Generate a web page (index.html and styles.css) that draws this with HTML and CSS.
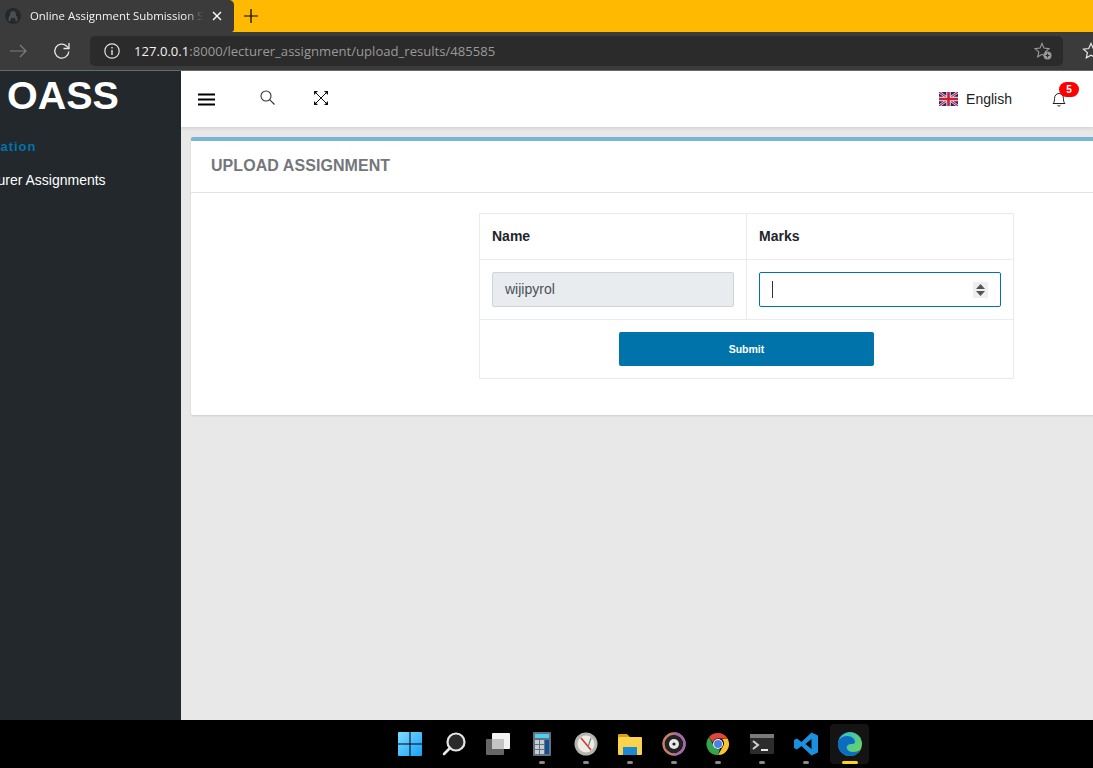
FILE: index.html
```html
<!DOCTYPE html>
<html>

<head>
    <title>Online Assignment Submission System</title>
    <link rel="stylesheet" href="styles.css">
</head>

<body>
    <!-- Browser tabs -->
    <div class="tab-strip">
        <div class="tab">
            <svg class="tab-favicon" width="16" height="16" viewBox="0 0 16 16">
                <circle cx="8" cy="8" r="8" fill="#25292c" />
                <path d="M3.500 13c0-3 .5-4.500 1.500-5.500C5 4.500 6 3 8 3s3 1.500 3 4.500c1 1 1.500 2.500 1.500 5.500h-2c0-2-.5-3-1.500-3.500L8 11 7 9.500C6 10 5.500 11 5.500 13z" fill="#4a4f53" />
            </svg>
            <span class="tab-title">Online Assignment Submission S</span>
            <svg class="tab-close" width="10" height="10" viewBox="0 0 10 10">
                <path d="M1 1l8 8M9 1l-8 8" stroke="#fff" stroke-width="1.400" />
            </svg>
        </div>
        <svg class="tab-new" width="14" height="14" viewBox="0 0 14 14">
            <path d="M7 0v14M0 7h14" stroke="#000" stroke-width="1.200" />
        </svg>
    </div>

    <!-- Browser toolbar -->
    <div class="toolbar">
        <svg class="nav-forward" width="18" height="14" viewBox="0 0 18 14">
            <path d="M1 7h16M11 1l6 6-6 6" fill="none" stroke="#7d7d7d" stroke-width="1.200" />
        </svg>
        <svg class="nav-reload" width="18" height="18" viewBox="0 0 18 18">
            <path d="M15.800 9.500a7 7 0 1 1-2.300-5.600L15.500 6" fill="none" stroke="#e8e8e8" stroke-width="1.300" />
            <path d="M16 1V6.500H10.500" fill="none" stroke="#e8e8e8" stroke-width="1.300" />
        </svg>
        <div class="address-bar">
            <svg class="info-icon" width="16" height="16" viewBox="0 0 16 16">
                <circle cx="8" cy="8" r="7.200" fill="none" stroke="#e4e4e4" stroke-width="1.200" />
                <path d="M8 7v5M8 4v1.600" stroke="#e4e4e4" stroke-width="1.400" />
            </svg>
            <span class="url"><span class="url-host">127.0.0.1</span>:8000/lecturer_assignment/upload_results/485585</span>
            <svg class="fav-add" width="18" height="18" viewBox="0 0 18 18">
                <path d="M8 1.500l2 4.600 5 .5-3.800 3.300 1.100 4.900L8 12.300 3.700 14.800l1.100-4.900L1 6.600l5-.5z" fill="none" stroke="#9a9a9a" stroke-width="1.100" />
                <circle cx="13.500" cy="13.500" r="4" fill="#9a9a9a" />
                <path d="M13.500 11.500v4M11.500 13.500h4" stroke="#2b2b2b" stroke-width="1" />
            </svg>
        </div>
        <svg class="fav-star" width="18" height="18" viewBox="0 0 18 18">
            <path d="M9 1.500l2.300 5 5.200.6-3.900 3.500 1.100 5.200L9 13.200 4.300 15.800l1.100-5.200L1.500 7.100l5.200-.6z" fill="none" stroke="#e8e8e8" stroke-width="1.200" />
        </svg>
    </div>

    <div class="app">
        <aside class="sidebar">
            <div class="sidebar-inner">
                <div class="brand">OASS</div>
                <div class="nav-heading">Navigation</div>
                <a class="nav-link">Lecturer Assignments</a>
            </div>
        </aside>

        <div class="content">
            <header class="topbar">
                <svg class="menu-icon" width="17" height="13" viewBox="0 0 17 13">
                    <path d="M0 1.500h17M0 6.500h17M0 11.500h17" stroke="#000" stroke-width="2" />
                </svg>
                <svg class="search-icon" width="15" height="15" viewBox="0 0 15 15">
                    <circle cx="6" cy="6" r="5" fill="none" stroke="#333" stroke-width="1.100" />
                    <path d="M9.600 9.600L14.500 14.500" stroke="#333" stroke-width="1.100" />
                </svg>
                <svg class="expand-icon" width="14" height="14" viewBox="0 0 14 14">
                    <path d="M2 2l10 10M12 2L2 12" stroke="#111" stroke-width="1" />
                    <path d="M0 0h4L0 4zM14 0v4L10 0zM14 14h-4l4-4zM0 14v-4l4 4z" fill="#111" />
                </svg>
                <div class="lang">
                    <svg class="flag" width="19" height="14" viewBox="0 0 19 14">
                        <rect width="19" height="14" fill="#1c2a72" />
                        <path d="M0 0l19 14M19 0L0 14" stroke="#f4e6e6" stroke-width="2.600" />
                        <path d="M0 0l19 14M19 0L0 14" stroke="#c8203a" stroke-width="1.200" />
                        <path d="M9.500 0v14M0 7h19" stroke="#f6e8e8" stroke-width="4.400" />
                        <path d="M9.500 0v14M0 7h19" stroke="#c8203a" stroke-width="2.600" />
                    </svg>
                    <span>English</span>
                </div>
                <div class="bell">
                    <svg width="14" height="15" viewBox="0 0 14 15">
                        <path d="M1 11.500c1.500-1.500 1.500-3 1.500-5C2.500 3.500 4.500 1.500 7 1.500s4.500 2 4.500 5c0 2 0 3.500 1.500 5z" fill="none" stroke="#222" stroke-width="1" />
                        <path d="M5.500 13.200c.6 1.100 2.400 1.100 3 0" fill="none" stroke="#222" stroke-width="1" />
                    </svg>
                    <span class="badge">5</span>
                </div>
            </header>

            <main class="main">
                <section class="card">
                    <div class="card-header">UPLOAD ASSIGNMENT</div>
                    <div class="card-body">
                        <table class="marks-table">
                            <tr>
                                <th>Name</th>
                                <th>Marks</th>
                            </tr>
                            <tr>
                                <td><div class="field field-disabled">wijipyrol</div></td>
                                <td>
                                    <div class="field field-focus">
                                        <span class="caret"></span>
                                        <span class="spinner">
                                            <svg width="9" height="12" viewBox="0 0 9 12">
                                                <path d="M4.500 0L9 5H0zM4.500 12L0 7h9z" fill="#555" />
                                            </svg>
                                        </span>
                                    </div>
                                </td>
                            </tr>
                            <tr>
                                <td colspan="2" class="submit-cell"><button class="submit-btn">Submit</button></td>
                            </tr>
                        </table>
                    </div>
                </section>
            </main>
        </div>
    </div>

    <!-- Windows taskbar -->
    <footer class="taskbar">
        <div class="task-item">
            <svg width="24" height="24" viewBox="0 0 24 24">
                <defs>
                    <linearGradient id="winGrad" x1="0" y1="0" x2="1" y2="1">
                        <stop offset="0" stop-color="#7fdcff" />
                        <stop offset="1" stop-color="#18a0fb" />
                    </linearGradient>
                </defs>
                <path d="M0 1a1 1 0 0 1 1-1h10.500v11.500H0zM12.500 0H23a1 1 0 0 1 1 1v10.500H12.500zM0 12.500h11.500V24H1a1 1 0 0 1-1-1zM12.500 12.500H24V23a1 1 0 0 1-1 1H12.500z" fill="url(#winGrad)" />
            </svg>
        </div>
        <div class="task-item">
            <svg width="24" height="24" viewBox="0 0 24 24">
                <circle cx="14" cy="10" r="8.500" fill="#2a2a2a" stroke="#e6e6e6" stroke-width="2.200" />
                <path d="M8 16l-6 6" stroke="#e6e6e6" stroke-width="2.600" stroke-linecap="round" />
            </svg>
        </div>
        <div class="task-item">
            <svg width="24" height="24" viewBox="0 0 24 24">
                <rect x="6" y="1" width="18" height="16" rx="1" fill="#f2f2f2" />
                <rect x="0" y="7" width="18" height="16" rx="1" fill="#666" />
                <rect x="6" y="7" width="12" height="10" fill="#c4c4c4" />
            </svg>
        </div>
        <div class="task-item task-open">
            <svg width="18" height="24" viewBox="0 0 18 24">
                <rect width="18" height="24" rx="1" fill="#68727d" />
                <rect x="2" y="2" width="14" height="4" fill="#4dd0f0" />
                <path d="M2 8h4v4H2zM7 8h4v4H7zM2 13h4v4H2zM7 13h4v4H7zM2 18h4v4H2zM7 18h4v4H7z" fill="#c6ced6" />
                <rect x="12" y="8" width="4" height="14" fill="#12509c" />
            </svg>
        </div>
        <div class="task-item task-open">
            <svg width="24" height="24" viewBox="0 0 24 24">
                <circle cx="12" cy="12" r="11.500" fill="#b5b5b0" />
                <circle cx="12" cy="12" r="8.500" fill="#ecebe6" />
                <path d="M7 6l10 12" stroke="#d8352a" stroke-width="1.500" />
                <path d="M17 6l-3 9" stroke="#7a7a7a" stroke-width="1.200" />
            </svg>
        </div>
        <div class="task-item task-open">
            <svg width="24" height="22" viewBox="0 0 24 22">
                <path d="M0 2a1 1 0 0 1 1-1h8l3 3v3H0z" fill="#d9a010" />
                <rect y="4" width="24" height="18" rx="1" fill="#fbd24e" />
                <rect x="5" y="14" width="14" height="8" fill="#1a8ad4" />
            </svg>
        </div>
        <div class="task-item task-open">
            <svg width="24" height="24" viewBox="0 0 24 24">
                <circle cx="12" cy="12" r="10.500" fill="#222" stroke="#c77f68" stroke-width="2.400" />
                <path d="M12 1.500A10.500 10.500 0 0 1 22.500 12 10.500 10.500 0 0 1 12 22.500" fill="none" stroke="#a068b0" stroke-width="2.400" />
                <circle cx="12" cy="12" r="5" fill="#e8e8e8" />
                <circle cx="12" cy="12" r="1.600" fill="#222" />
            </svg>
        </div>
        <div class="task-item task-open">
            <svg width="24" height="24" viewBox="0 0 24 24">
                <path d="M12 1a11 11 0 0 1 9.530 5.500H12a5.500 5.500 0 0 0-5.300 4L3 5A11 11 0 0 1 12 1z" fill="#e2453a" />
                <path d="M21.530 6.500A11 11 0 0 1 12 23l4.800-8.300A5.500 5.500 0 0 0 16 7z" fill="#fbc52d" />
                <path d="M12 23A11 11 0 0 1 3 5l4.700 8.500A5.500 5.500 0 0 0 14 17z" fill="#34a44f" />
                <circle cx="12" cy="12" r="5" fill="#fff" />
                <circle cx="12" cy="12" r="4" fill="#4a80e8" />
            </svg>
        </div>
        <div class="task-item task-open">
            <svg width="24" height="20" viewBox="0 0 24 20">
                <rect width="24" height="20" rx="1" fill="#2c2c2c" />
                <rect width="24" height="4" fill="#7a7a7a" />
                <path d="M3 7l5 4-5 4" fill="none" stroke="#d0d0d0" stroke-width="2" />
                <path d="M11 16h7" stroke="#e8e8e8" stroke-width="2" />
            </svg>
        </div>
        <div class="task-item task-open">
            <svg width="24" height="24" viewBox="0 0 24 24">
                <path d="M17.500 0.500L24 3.500v17l-6.500 3-10-9.500-4.500 3.500L0 16V8l3-1.500L7.500 10zM17.500 7l-6 5 6 5z" fill="#1b8fe0" fill-rule="evenodd" />
            </svg>
        </div>
        <div class="task-item task-active">
            <svg width="24" height="24" viewBox="0 0 24 24">
                <defs>
                    <linearGradient id="edgeTop" x1="0" y1="0" x2="1" y2="1">
                        <stop offset="0" stop-color="#2dbbd8" />
                        <stop offset="1" stop-color="#78d84e" />
                    </linearGradient>
                </defs>
                <circle cx="12" cy="12" r="12" fill="url(#edgeTop)" />
                <path d="M22 18c-2 4-6 6-10 6C5 24 0 19 0 12 0 7 4 4 9 4c5 0 8 3 8 6 0 1-1 2-3 2-4 0-6 2-5 5 1 2 3 3 6 3 3 0 5-1 7-2z" fill="#0c6cc0" />
            </svg>
        </div>
    </footer>
</body>

</html>
```

FILE: styles.css
```css
* {
    box-sizing: border-box;
}

html,
body {
    height: 100%;
}

body {
    margin: 0;
    display: flex;
    flex-direction: column;
    overflow: hidden;
    font-family: "Liberation Sans", Arial, sans-serif;
    color: #212529;
}

svg {
    flex-shrink: 0;
}

/* Browser tabs */
.tab-strip {
    display: flex;
    align-items: center;
    height: 32px;
    flex-shrink: 0;
    background-color: #ffb900;
}

.tab {
    display: flex;
    align-items: center;
    width: 234px;
    height: 32px;
    padding: 0 12px 0 5px;
    background-color: #3b3b3b;
    border-top-right-radius: 5px;
    border-bottom-right-radius: 3px;
}

.tab-title {
    flex: 1;
    margin-left: 9px;
    margin-bottom: 2px;
    overflow: hidden;
    white-space: nowrap;
    font-family: "Open Sans", sans-serif;
    font-size: 11.4px;
    color: #f4f4f4;
    -webkit-mask-image: linear-gradient(to right, #000 90%, transparent 100%);
    mask-image: linear-gradient(to right, #000 90%, transparent 100%);
}

.tab-close {
    margin-left: 9px;
}

.tab-new {
    margin-left: 10px;
}

/* Browser toolbar */
.toolbar {
    display: flex;
    align-items: center;
    height: 39px;
    flex-shrink: 0;
    padding-left: 9px;
    background-color: #3b3b3b;
    border-bottom: 1px solid #6a6a6a;
}

.nav-reload {
    margin-left: 26px;
}

.address-bar {
    display: flex;
    align-items: center;
    width: 973px;
    height: 30px;
    margin-left: 19px;
    padding: 0 11px 0 14px;
    flex-shrink: 0;
    background-color: #2b2b2b;
    border-radius: 5px;
}

.url {
    flex: 1;
    margin-left: 14px;
    font-family: "Open Sans", sans-serif;
    font-size: 13.1px;
    color: #9a9a9a;
}

.url-host {
    color: #f2f2f2;
}

.fav-star {
    margin-left: 19px;
}

/* App */
.app {
    display: flex;
    flex: 1;
    min-height: 0;
}

.sidebar {
    width: 181px;
    flex-shrink: 0;
    overflow: hidden;
    background-color: #22282c;
}

.sidebar-inner {
    width: 260px;
    margin-left: -21px;
}

.brand {
    height: 48px;
    padding-left: 28px;
    font-size: 39.5px;
    font-weight: bold;
    line-height: 48px;
    color: #fff;
}

.nav-heading {
    margin-top: 20px;
    margin-left: -19px;
    font-size: 13px;
    font-weight: bold;
    letter-spacing: 1px;
    color: #0073aa;
}

.nav-link {
    display: block;
    margin-top: 18px;
    margin-left: -8px;
    font-size: 14px;
    color: #fff;
}

.content {
    flex: 1;
    min-width: 0;
    display: flex;
    flex-direction: column;
    background-color: #e8e8e8;
}

/* Top bar */
.topbar {
    display: flex;
    align-items: center;
    height: 56px;
    flex-shrink: 0;
    padding-left: 17px;
    background-color: #fff;
    box-shadow: 0 1px 4px rgba(0, 0, 0, 0.12);
}

.menu-icon {
    margin-top: 1px;
}

.search-icon {
    margin-left: 45px;
    margin-bottom: 3px;
}

.expand-icon {
    margin-left: 39px;
    margin-bottom: 3px;
}

.lang {
    display: flex;
    align-items: center;
    gap: 8px;
    margin-left: auto;
    font-size: 14px;
    color: #222;
}

.flag {
    display: block;
}

.bell {
    position: relative;
    display: flex;
    margin-left: 40px;
    margin-right: 27px;
}

.badge {
    position: absolute;
    top: -10px;
    left: 7px;
    width: 20px;
    height: 15px;
    border-radius: 8px;
    background-color: #f00;
    font-size: 10px;
    font-weight: bold;
    line-height: 15px;
    text-align: center;
    color: #fff;
}

/* Card */
.main {
    flex: 1;
    padding: 10px 0 0 10px;
}

.card {
    width: 1000px;
    background-color: #fff;
    border-top: 4px solid #7ab6d4;
    border-radius: 2px;
    box-shadow: 0 1px 2px rgba(0, 0, 0, 0.12);
}

.card-header {
    height: 52px;
    padding-left: 20px;
    font-size: 16px;
    font-weight: bold;
    letter-spacing: 0.06px;
    line-height: 49px;
    color: #73767a;
    border-bottom: 1px solid #e2e2e2;
}

.card-body {
    padding: 20px 0 36px 288px;
}

.marks-table {
    width: 535px;
    border-collapse: collapse;
    table-layout: fixed;
    font-size: 14px;
}

.marks-table th,
.marks-table td {
    padding: 12px;
    border: 1px solid #e9ecef;
    text-align: left;
}

.marks-table th {
    height: 46px;
    padding-top: 11px;
    padding-bottom: 13px;
    font-weight: bold;
    color: #212529;
}

.field {
    display: flex;
    align-items: center;
    height: 35px;
    padding: 0 12px;
    border: 1px solid #ced4da;
    border-radius: 2px;
}

.field-disabled {
    padding-bottom: 2px;
    background-color: #e9ecef;
    color: #495057;
}

.field-focus {
    justify-content: space-between;
    border-color: #0073aa;
}

.caret {
    width: 1px;
    height: 17px;
    background-color: #333;
}

.spinner {
    display: flex;
    align-items: center;
    justify-content: center;
    width: 15px;
    height: 16px;
    background-color: #efefef;
}

.marks-table .submit-cell {
    text-align: center;
}

.submit-btn {
    display: block;
    width: 255px;
    height: 34px;
    margin: 0 auto;
    padding: 0;
    border: none;
    border-radius: 2px;
    background-color: #0073aa;
    font-family: "Liberation Sans", Arial, sans-serif;
    font-size: 10.5px;
    font-weight: bold;
    color: #fff;
}

/* Windows taskbar */
.taskbar {
    display: flex;
    align-items: center;
    height: 48px;
    flex-shrink: 0;
    padding-left: 388px;
    background-color: #000;
}

.task-item {
    position: relative;
    display: flex;
    align-items: center;
    justify-content: center;
    width: 44px;
    height: 40px;
}

.task-open::after {
    content: "";
    position: absolute;
    bottom: 0;
    left: 19px;
    width: 6px;
    height: 3px;
    border-radius: 2px;
    background-color: #8a8a8a;
}

.task-active {
    width: 39px;
    margin-left: 2px;
    background-color: #141414;
    border-radius: 4px;
}

.task-active::after {
    content: "";
    position: absolute;
    bottom: 0;
    left: 12px;
    width: 16px;
    height: 3px;
    border-radius: 2px;
    background-color: #ffd21e;
}
```
